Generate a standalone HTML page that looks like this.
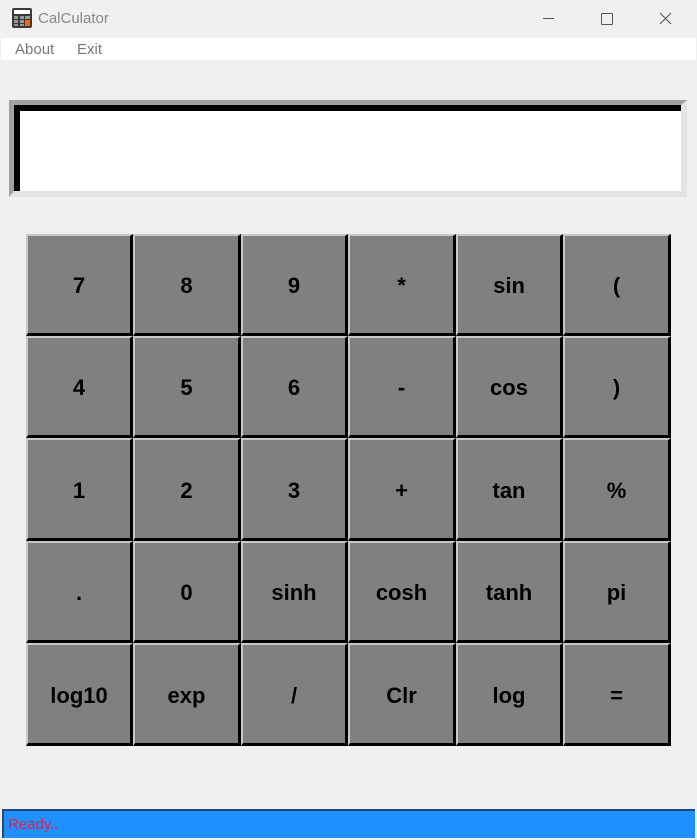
<!DOCTYPE html>
<html><head><style>
body{margin:0;width:697px;height:840px;background:#f0f0f0;font-family:"Liberation Sans",sans-serif;position:relative;overflow:hidden}
.t{position:absolute;left:0;top:0;width:697px;height:38px;background:#f0f0f0}
.menu{position:absolute;left:1px;top:38px;width:695px;height:22px;background:#fff;font-size:15px;color:#777}
.menu span{position:absolute;top:3px}
.disp{position:absolute;left:9px;top:100px;width:678px;height:97px;box-sizing:border-box;border-style:solid;border-width:5px 6px 6px 5px;border-color:#a0a0a0 #e3e3e3 #e3e3e3 #a0a0a0;background:#fff}
.disp div{position:absolute;left:0;top:0;right:0;bottom:0;border-style:solid;border-width:6px 0 0 6px;border-color:#000}
.b{position:absolute;box-sizing:border-box;background:#808080;border-style:solid;border-width:2px 3px 3px 2px;border-color:#c8c8c8 #000 #000 #c8c8c8;display:flex;align-items:center;justify-content:center;font-weight:bold;font-size:22px;color:#000;padding-top:3px}
.st{position:absolute;left:2px;top:809px;width:693px;height:29px;box-sizing:border-box;background:#1e90ff;border-top:2px solid #1a4a80;border-left:2px solid #1a4a80;color:#e0204a;font-size:15px;padding:5px 0 0 4px}
</style></head><body>
<div class="t">
<svg style="position:absolute;left:12px;top:8px" width="20" height="20" viewBox="0 0 20 20"><rect x="0" y="0" width="20" height="20" rx="2" fill="#3a3a3a"/><rect x="2" y="2" width="16" height="4" fill="#fff"/><g fill="#999"><rect x="2" y="8" width="4" height="3"/><rect x="8" y="8" width="4" height="3"/><rect x="2" y="12" width="4" height="3"/><rect x="8" y="12" width="4" height="3"/><rect x="2" y="16" width="4" height="2"/><rect x="8" y="16" width="4" height="2"/></g><rect x="13" y="12" width="5" height="6" fill="#f60"/><rect x="13" y="8" width="5" height="3" fill="#999"/></svg>
<span style="position:absolute;left:38px;top:10px;font-size:15px;color:#888">CalCulator</span>
<div style="position:absolute;left:543px;top:18px;width:11px;height:1px;background:#555"></div>
<div style="position:absolute;left:601px;top:13px;width:10px;height:10px;border:1px solid #555;border-radius:1px"></div>
<svg style="position:absolute;left:659px;top:12px" width="13" height="13"><path d="M1 1L12 12M12 1L1 12" stroke="#555" stroke-width="1.1"/></svg>
</div>
<div class="menu"><span style="left:14px">About</span><span style="left:76px">Exit</span></div>
<div class="disp"><div></div></div>
<div id="g"></div>
<div class="st">Ready..</div>
<script>
var L=["7","8","9","*","sin","(","4","5","6","-","cos",")","1","2","3","+","tan","%",".","0","sinh","cosh","tanh","pi","log10","exp","/","Clr","log","="];
var xs=[26,133,241,348,456,563,671],ys=[234,336,438,541,643,746],h="";
for(var i=0;i<30;i++){var c=i%6,r=(i/6)|0;h+='<div class="b" style="left:'+xs[c]+'px;top:'+ys[r]+'px;width:'+(xs[c+1]-xs[c])+'px;height:'+(ys[r+1]-ys[r])+'px">'+L[i]+'</div>';}
document.getElementById("g").innerHTML=h;
</script>
</body></html>
